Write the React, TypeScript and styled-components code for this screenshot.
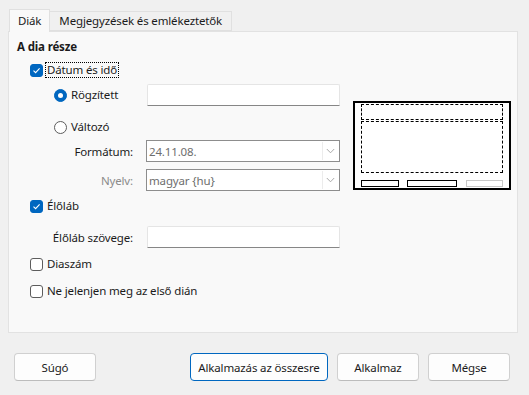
import { FC, PropsWithChildren } from "react";
import styled, { createGlobalStyle } from "styled-components";

const GlobalStyle = createGlobalStyle`
  html, body {
    margin: 0;
    padding: 0;
    background: #f0f0f0;
  }
  body {
    font-family: "Noto Sans", "Open Sans", sans-serif;
    font-size: 11.5px;
    letter-spacing: -0.15px;
    color: #1b1b1b;
  }
`;

const Dialog = styled.div`
  width: 529px;
  height: 395px;
  box-sizing: border-box;
  padding: 9px 11px 0 8px;
  display: flex;
  flex-direction: column;
`;

const TabBar = styled.div`
  display: flex;
  align-items: flex-end;
  height: 22px;
  padding-left: 1px;
  position: relative;
  z-index: 1;
`;

const Tab = styled.div<{ $active?: boolean }>`
  box-sizing: border-box;
  height: ${(p) => (p.$active ? "23px" : "20px")};
  margin-bottom: ${(p) => (p.$active ? "-1px" : "0")};
  padding: 0 ${(p) => (p.$active ? "8px" : "9px")};
  display: flex;
  align-items: center;
  background: ${(p) => (p.$active ? "#f9f9f9" : "#f0f0f0")};
  border: 1px solid #e0e0e0;
  border-bottom: ${(p) => (p.$active ? "none" : "1px solid #e0e0e0")};
  border-left-width: ${(p) => (p.$active ? "1px" : "0")};
  line-height: 16px;
`;

const Panel = styled.div`
  box-sizing: border-box;
  width: 510px;
  height: 302px;
  background: #f9f9f9;
  border: 1px solid #e2e2e2;
  padding: 7px 0 0 8px;
  display: flex;
  gap: 13px;
`;

const LeftColumn = styled.div`
  width: 323px;
  display: flex;
  flex-direction: column;
`;

const Heading = styled.div`
  font-weight: 700;
  height: 16px;
  line-height: 16px;
`;

const Row = styled.div<{ $mt: number; $indent?: number }>`
  display: flex;
  align-items: center;
  height: 22px;
  margin-top: ${(p) => p.$mt}px;
  padding-left: ${(p) => p.$indent ?? 0}px;
`;

const Box = styled.span<{ $checked?: boolean }>`
  box-sizing: border-box;
  width: 13px;
  height: 13px;
  border-radius: 3px;
  flex: none;
  display: flex;
  align-items: center;
  justify-content: center;
  background: ${(p) => (p.$checked ? "#0067c0" : "#ffffff")};
  border: 1px solid ${(p) => (p.$checked ? "#0067c0" : "#5d5d5d")};
`;

const Circle = styled.span<{ $checked?: boolean }>`
  box-sizing: border-box;
  width: 13px;
  height: 13px;
  border-radius: 50%;
  flex: none;
  display: flex;
  align-items: center;
  justify-content: center;
  background: ${(p) => (p.$checked ? "#0067c0" : "#ffffff")};
  border: 1px solid ${(p) => (p.$checked ? "#0067c0" : "#5d5d5d")};

  &::after {
    content: "";
    display: ${(p) => (p.$checked ? "block" : "none")};
    width: 5px;
    height: 5px;
    border-radius: 50%;
    background: #ffffff;
  }
`;

const OptionText = styled.span<{ $focused?: boolean }>`
  margin-left: 3px;
  padding: 0 1px;
  line-height: 14px;
  outline: ${(p) => (p.$focused ? "1px dotted #000" : "none")};
  outline-offset: 0;
`;

const FieldLabel = styled.span<{ $disabled?: boolean }>`
  width: 116px;
  text-align: right;
  color: ${(p) => (p.$disabled ? "#8b8b8b" : "#1b1b1b")};
  margin-right: 13px;
  flex: none;
`;

const Spacer = styled.span`
  flex: 1;
`;

const TextInput = styled.div`
  box-sizing: border-box;
  width: 193px;
  height: 22px;
  margin-left: 1px;
  background: #ffffff;
  border: 1px solid #e5e5e5;
  border-bottom: 1px solid #868686;
  border-radius: 2px 2px 0 0;
`;

const Combo = styled.div`
  box-sizing: border-box;
  width: 194px;
  height: 22px;
  background: #ffffff;
  border: 1px solid #8d8d8d;
  display: flex;
  align-items: center;
  padding-left: 2px;
  color: #6e6e6e;
`;

const ComboText = styled.span`
  flex: 1;
`;

const ComboButton = styled.span`
  box-sizing: border-box;
  width: 16px;
  height: 18px;
  margin-right: 1px;
  border-left: 1px solid #ececec;
  display: flex;
  align-items: center;
  justify-content: center;
`;

const Preview = styled.div`
  box-sizing: border-box;
  width: 158px;
  height: 89px;
  margin-top: 62px;
  background: #ffffff;
  border: 2px solid #000;
  padding: 1px 6px 0 6px;
  display: flex;
  flex-direction: column;
`;

const DashedArea = styled.div<{ $h: number; $mt: number }>`
  box-sizing: border-box;
  height: ${(p) => p.$h}px;
  margin-top: ${(p) => p.$mt}px;
  border: 1px dashed #000;
`;

const FooterRow = styled.div`
  display: flex;
  margin-top: 7px;
`;

const FooterBox = styled.div<{ $w: number; $ml: number; $dim?: boolean }>`
  box-sizing: border-box;
  width: ${(p) => p.$w}px;
  height: 7px;
  margin-left: ${(p) => p.$ml}px;
  border: 1px solid ${(p) => (p.$dim ? "#c8c8c8" : "#000")};
`;

const ButtonBar = styled.div`
  display: flex;
  align-items: center;
  margin-top: 20px;
  padding-left: 6px;
`;

const Button = styled.button<{ $primary?: boolean; $ml?: number }>`
  box-sizing: border-box;
  width: ${(p) => (p.$primary ? "138px" : "82px")};
  height: 28px;
  margin-left: ${(p) => p.$ml ?? 9}px;
  background: #fdfdfd;
  border: 1px solid ${(p) => (p.$primary ? "#0067c0" : "#d0d0d0")};
  border-bottom-color: ${(p) => (p.$primary ? "#0067c0" : "#bcbcbc")};
  border-radius: 4px;
  font-family: "Noto Sans", "Open Sans", sans-serif;
  font-size: 11.5px;
  letter-spacing: -0.15px;
  color: #1b1b1b;
  padding: 0;
`;

const Check: FC = () => (
  <svg width="9" height="9" viewBox="0 0 9 9">
    <path d="M1.5 4.6 L3.6 6.6 L7.6 2.4" fill="none" stroke="#fff" strokeWidth="1.1" />
  </svg>
);

const Chevron: FC = () => (
  <svg width="9" height="6" viewBox="0 0 9 6">
    <path d="M0.8 1 L4.5 4.8 L8.2 1" fill="none" stroke="#a0a0a0" strokeWidth="0.9" />
  </svg>
);

const CheckOption: FC<PropsWithChildren<{ checked?: boolean; focused?: boolean }>> = ({
  checked,
  focused,
  children,
}) => (
  <>
    <Box $checked={checked}>{checked && <Check />}</Box>
    <OptionText $focused={focused}>{children}</OptionText>
  </>
);

const RadioOption: FC<PropsWithChildren<{ checked?: boolean }>> = ({ checked, children }) => (
  <>
    <Circle $checked={checked} />
    <OptionText>{children}</OptionText>
  </>
);

export default function App() {
  return (
    <>
      <GlobalStyle />
      <Dialog>
        <TabBar>
          <Tab $active>Diák</Tab>
          <Tab>Megjegyzések és emlékeztetők</Tab>
        </TabBar>
        <Panel>
          <LeftColumn>
            <Heading>A dia része</Heading>
            <Row $mt={4} $indent={13}>
              <CheckOption checked focused>
                Dátum és idő
              </CheckOption>
            </Row>
            <Row $mt={3} $indent={37}>
              <RadioOption checked>Rögzített</RadioOption>
              <Spacer />
              <TextInput />
            </Row>
            <Row $mt={10} $indent={37}>
              <RadioOption>Változó</RadioOption>
            </Row>
            <Row $mt={2}>
              <FieldLabel>Formátum:</FieldLabel>
              <Combo>
                <ComboText>24.11.08.</ComboText>
                <ComboButton>
                  <Chevron />
                </ComboButton>
              </Combo>
            </Row>
            <Row $mt={7}>
              <FieldLabel $disabled>Nyelv:</FieldLabel>
              <Combo>
                <ComboText>magyar {"{hu}"}</ComboText>
                <ComboButton>
                  <Chevron />
                </ComboButton>
              </Combo>
            </Row>
            <Row $mt={4} $indent={13}>
              <CheckOption checked>Élőláb</CheckOption>
            </Row>
            <Row $mt={9}>
              <FieldLabel>Élőláb szövege:</FieldLabel>
              <TextInput />
            </Row>
            <Row $mt={5} $indent={13}>
              <CheckOption>Diaszám</CheckOption>
            </Row>
            <Row $mt={5} $indent={13}>
              <CheckOption>Ne jelenjen meg az első dián</CheckOption>
            </Row>
          </LeftColumn>
          <Preview>
            <DashedArea $h={16} $mt={0} />
            <DashedArea $h={52} $mt={1} />
            <FooterRow>
              <FooterBox $w={38} $ml={0} />
              <FooterBox $w={50} $ml={8} />
              <FooterBox $w={37} $ml={9} $dim />
            </FooterRow>
          </Preview>
        </Panel>
        <ButtonBar>
          <Button $ml={0}>Súgó</Button>
          <Button $primary $ml={94}>
            Alkalmazás az összesre
          </Button>
          <Button>Alkalmaz</Button>
          <Button>Mégse</Button>
        </ButtonBar>
      </Dialog>
    </>
  );
}
